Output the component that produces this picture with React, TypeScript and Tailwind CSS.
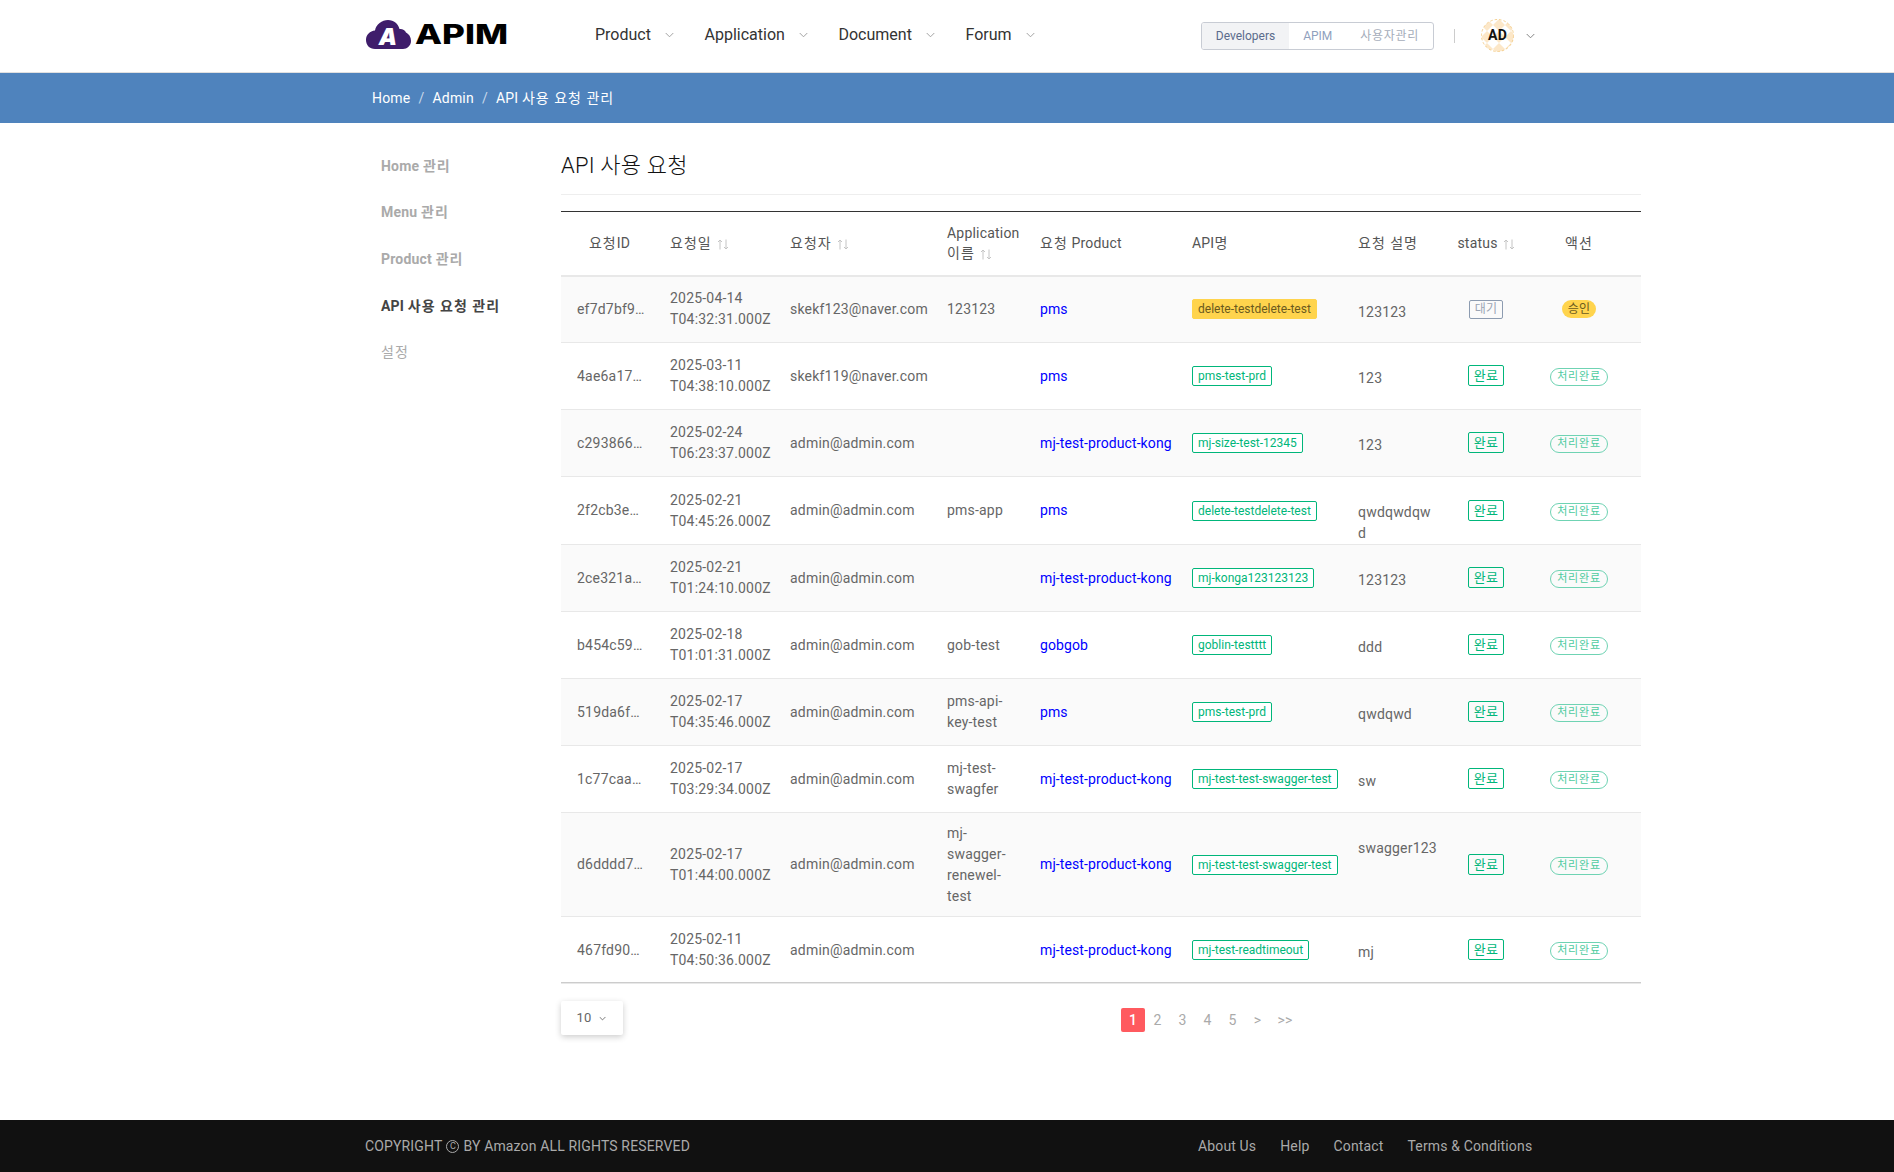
import React from "react";

const font = "font-['Roboto','Noto_Sans_CJK_KR',sans-serif]";

function K({ children }: { children: React.ReactNode }) {
  return <span className="tracking-[1px]">{children}</span>;
}

function Chevron({ className = "" }: { className?: string }) {
  return (
    <svg viewBox="0 0 10 6" className={className} fill="none" stroke="currentColor" strokeWidth="1">
      <path d="M0.8 0.8 L5 5 L9.2 0.8" />
    </svg>
  );
}

function Sort() {
  return (
    <svg viewBox="0 0 12 11" className="inline-block w-[12px] h-[11px] ml-[5px] text-[#c4c4c4]" fill="none" stroke="currentColor" strokeWidth="1">
      <path d="M3 10.5 V1 M1 3 L3 1 L5 3" />
      <path d="M9 0.5 V10 M7 8 L9 10 L11 8" />
    </svg>
  );
}

function Logo() {
  return (
    <div className="flex items-center -mt-[3px]">
      <svg viewBox="0 0 45 29" className="w-[45px] h-[29px] shrink-0 overflow-visible">
        <path d="M9 29 C3.5 29 0 25 0 20 C0 14.5 4 11 9 10.5 C10 4.5 16 0 22 0 C28 0 32 3.5 33.5 9 C36 8.5 39 10 40 12.5 C43 14 45 17 45 21 C45 25.5 41 29 37 29 Z" fill="#3f1d6b" />
        <text x="22" y="25" textAnchor="middle" fill="#ffffff" fontFamily="Inter, sans-serif" fontWeight="900" fontStyle="italic" fontSize="23">A</text>
      </svg>
      <span className="ml-[4px] mt-[1px] text-[27px] leading-[34px] font-extrabold text-black font-['Inter',sans-serif] tracking-[0px] scale-x-[1.3] origin-left">APIM</span>
    </div>
  );
}

function NavItem({ label }: { label: string }) {
  return (
    <div className="flex items-center mr-[30.6px]">
      <span className="text-[16px] tracking-normal text-[#333333]">{label}</span>
      <Chevron className="w-[9px] h-[6px] ml-[14px] text-[#999999]" />
    </div>
  );
}

type Row = {
  id: string;
  d1: string;
  d2: string;
  user: string;
  app: string[];
  product: string;
  api: string;
  desc: string[];
  pending?: boolean;
  tall?: boolean;
};

const rows: Row[] = [
  { id: "ef7d7bf9…", d1: "2025-04-14", d2: "T04:32:31.000Z", user: "skekf123@naver.com", app: ["123123"], product: "pms", api: "delete-testdelete-test", desc: ["123123"], pending: true },
  { id: "4ae6a17…", d1: "2025-03-11", d2: "T04:38:10.000Z", user: "skekf119@naver.com", app: [], product: "pms", api: "pms-test-prd", desc: ["123"] },
  { id: "c293866…", d1: "2025-02-24", d2: "T06:23:37.000Z", user: "admin@admin.com", app: [], product: "mj-test-product-kong", api: "mj-size-test-12345", desc: ["123"] },
  { id: "2f2cb3e…", d1: "2025-02-21", d2: "T04:45:26.000Z", user: "admin@admin.com", app: ["pms-app"], product: "pms", api: "delete-testdelete-test", desc: ["qwdqwdqw", "d"] },
  { id: "2ce321a…", d1: "2025-02-21", d2: "T01:24:10.000Z", user: "admin@admin.com", app: [], product: "mj-test-product-kong", api: "mj-konga123123123", desc: ["123123"] },
  { id: "b454c59…", d1: "2025-02-18", d2: "T01:01:31.000Z", user: "admin@admin.com", app: ["gob-test"], product: "gobgob", api: "goblin-testttt", desc: ["ddd"] },
  { id: "519da6f…", d1: "2025-02-17", d2: "T04:35:46.000Z", user: "admin@admin.com", app: ["pms-api-", "key-test"], product: "pms", api: "pms-test-prd", desc: ["qwdqwd"] },
  { id: "1c77caa…", d1: "2025-02-17", d2: "T03:29:34.000Z", user: "admin@admin.com", app: ["mj-test-", "swagfer"], product: "mj-test-product-kong", api: "mj-test-test-swagger-test", desc: ["sw"] },
  { id: "d6dddd7…", d1: "2025-02-17", d2: "T01:44:00.000Z", user: "admin@admin.com", app: ["mj-", "swagger-", "renewel-", "test"], product: "mj-test-product-kong", api: "mj-test-test-swagger-test", desc: ["swagger123"], tall: true },
  { id: "467fd90…", d1: "2025-02-11", d2: "T04:50:36.000Z", user: "admin@admin.com", app: [], product: "mj-test-product-kong", api: "mj-test-readtimeout", desc: ["mj"] },
];

function Th({ children, className = "" }: { children: React.ReactNode; className?: string }) {
  return <th className={`font-normal text-[14px] leading-[20px] text-[#555555] align-middle pb-[1px] ${className}`}>{children}</th>;
}

function TableRow({ r, i }: { r: Row; i: number }) {
  const bg = i % 2 === 0 ? "bg-[#fafafa]" : "bg-white";
  return (
    <tr className={`${bg} border-b border-[#e8e8e8] ${r.tall ? "h-[104px]" : "h-[67px]"}`}>
      <td className="pl-[16px] text-[14px] leading-[21px] text-[#666666] align-middle">{r.id}</td>
      <td className="pl-[16px] text-[14px] leading-[21px] text-[#666666] align-middle">
        <div>{r.d1}</div>
        <div>{r.d2}</div>
      </td>
      <td className="pl-[16px] text-[14px] leading-[21px] text-[#666666] align-middle">{r.user}</td>
      <td className="pl-[16px] text-[14px] leading-[21px] text-[#666666] align-middle">
        {r.app.map((a) => (
          <div key={a}>{a}</div>
        ))}
      </td>
      <td className="pl-[16px] text-[14px] leading-[21px] tracking-[0.1px] text-[#0000ff] align-middle">{r.product}</td>
      <td className="pl-[16px] pb-[2px] align-middle">
        <span
          className={`inline-block whitespace-nowrap text-[12px] tracking-normal leading-[16px] px-[5px] py-[1px] rounded-[2px] border ${
            r.pending ? "bg-[#ffd44d] border-[#ffd44d] text-[#6b5a1e]" : "bg-white border-[#00b67a] text-[#00b67a]"
          }`}
        >
          {r.api}
        </span>
      </td>
      <td className="pl-[16px] pt-[25px] text-[14px] leading-[21px] text-[#666666] align-top">
        {r.desc.map((d) => (
          <div key={d}>{d}</div>
        ))}
      </td>
      <td className="text-center pb-[2px] align-middle">
        {r.pending ? (
          <span className="inline-block text-[12px] leading-[15px] px-[5px] py-[1px] rounded-[2px] border border-[#8c9bb0] text-[#9aa5b4]">대기</span>
        ) : (
          <span className="inline-block text-[13px] leading-[17px] px-[5px] py-[1px] rounded-[2px] border border-[#00b67a] text-[#00b67a]">완료</span>
        )}
      </td>
      <td className="text-center pb-[2px] align-middle">
        {r.pending ? (
          <span className="inline-block text-[12px] leading-[16px] px-[6px] py-[1px] rounded-full bg-[#ffd44d] text-[#6b5a1e]">승인</span>
        ) : (
          <span className="inline-block text-[11px] leading-[14px] tracking-[0.8px] px-[6px] py-[1px] rounded-full border border-[#6fd3b3] text-[#4ecb9f]">처리완료</span>
        )}
      </td>
    </tr>
  );
}

export default function App() {
  return (
    <div className={`${font} tracking-[0.2px] w-[1894px] h-[1172px] bg-white flex flex-col overflow-hidden`}>
      <header className="h-[73px] shrink-0 border-b border-[#e0e0e0] bg-white flex items-center pl-[366px]">
        <div className="w-[229px] shrink-0">
          <Logo />
        </div>
        <nav className="flex items-center -mt-[2px]">
          <NavItem label="Product" />
          <NavItem label="Application" />
          <NavItem label="Document" />
          <NavItem label="Forum" />
        </nav>
        <div className="ml-[135.6px] flex items-center h-[28px] border border-[#c8ccd4] rounded-[3px] text-[12px] tracking-normal overflow-hidden">
          <div className="h-full flex items-center px-[14px] bg-[#f2f3f5] text-[#5a6b8c]">Developers</div>
          <div className="h-full flex items-center pl-[14px] pr-[14px] text-[#8fa0bd]">APIM</div>
          <div className="h-full flex items-center pl-[14px] pr-[14px] tracking-[0.7px] text-[#a5adba]">사용자관리</div>
        </div>
        <div className="ml-[20px] w-px h-[14px] bg-[#cccccc]" />
        <div className="relative ml-[26px] -mt-[2px] w-[33px] h-[33px] flex items-center justify-center text-[14px] font-bold text-[#111111]">
          <svg viewBox="0 0 33 33" className="absolute inset-0 w-[33px] h-[33px]">
            <defs>
              <pattern id="avatarDiamonds" width="12" height="12" patternUnits="userSpaceOnUse">
                <path d="M6 0 L12 6 L6 12 L0 6 Z" fill="#fce7c8" />
              </pattern>
            </defs>
            <circle cx="16.5" cy="16.5" r="16" fill="#ffffff" />
            <circle cx="16.5" cy="16.5" r="16" fill="url(#avatarDiamonds)" stroke="#f5cf8e" strokeWidth="1" strokeDasharray="2.5 2" />
          </svg>
          <span className="relative">AD</span>
        </div>
        <Chevron className="ml-[12px] w-[9px] h-[6px] text-[#777777]" />
      </header>

      <div className="h-[50px] shrink-0 bg-[#4f83bd] flex items-center pl-[372px] text-[14px] text-white">
        <span>Home</span>
        <span className="mx-[8px] text-[#c8d8ea]">/</span>
        <span>Admin</span>
        <span className="mx-[8px] text-[#c8d8ea]">/</span>
        <span>API <K>사용 요청 관리</K></span>
      </div>

      <div className="flex-1 flex pl-[381px]">
        <aside className="w-[180px] shrink-0 pt-[33px] text-[14px] font-bold leading-[21px] text-[#aaaaaa]">
          <div className="h-[46px]">Home <K>관리</K></div>
          <div className="h-[47px]">Menu <K>관리</K></div>
          <div className="h-[47px]">Product <K>관리</K></div>
          <div className="h-[46px] text-[#444444]">API <K>사용 요청 관리</K></div>
          <div className="font-normal"><K>설정</K></div>
        </aside>
        <main className="w-[1080px] shrink-0">
          <h1 className="mt-[28px] text-[22px] leading-[30px] font-light tracking-[0.2px] text-[#111111]">API 사용 요청</h1>
          <div className="mt-[13px] border-b border-[#eeeeee]" />
          <table className="mt-[16px] w-[1080px] table-fixed border-collapse border-t border-t-[#333333]">
            <colgroup>
              <col className="w-[93px]" />
              <col className="w-[120px]" />
              <col className="w-[157px]" />
              <col className="w-[93px]" />
              <col className="w-[152px]" />
              <col className="w-[166px]" />
              <col className="w-[113px]" />
              <col className="w-[62px]" />
              <col className="w-[124px]" />
            </colgroup>
            <thead>
              <tr className="h-[64px] border-b-[2px] border-b-[#e8e8e8]">
                <Th className="text-center pl-[4px]"><K>요청</K>ID</Th>
                <Th className="pl-[16px] text-left"><K>요청일</K><Sort /></Th>
                <Th className="pl-[16px] text-left"><K>요청자</K><Sort /></Th>
                <Th className="pl-[16px] text-left">Application<br /><K>이름</K><Sort /></Th>
                <Th className="pl-[16px] text-left"><K>요청</K> Product</Th>
                <Th className="pl-[16px] text-left">API<K>명</K></Th>
                <Th className="pl-[16px] text-left"><K>요청 설명</K></Th>
                <Th className="text-center whitespace-nowrap">status<Sort /></Th>
                <Th className="text-center"><K>액션</K></Th>
              </tr>
            </thead>
            <tbody>
              {rows.map((r, i) => (
                <TableRow key={r.id} r={r} i={i} />
              ))}
            </tbody>
          </table>
          <div className="border-t border-[#cccccc] -mt-[2px] flex items-start justify-between">
            <div className="mt-[18px] w-[62px] h-[34px] bg-white rounded-[2px] shadow-[0_2px_6px_rgba(0,0,0,0.2)] flex items-center justify-center text-[13px] text-[#666666] pr-[2px]">
              10
              <Chevron className="ml-[7px] w-[7px] h-[5px] text-[#444444]" />
            </div>
            <div className="mt-[25px] mr-[341px] flex items-center text-[14px] text-[#aaaaaa]">
              <span className="w-[24px] h-[24px] bg-[#ff5a5f] rounded-[2px] text-white font-medium flex items-center justify-center">1</span>
              <span className="w-[25px] text-center">2</span>
              <span className="w-[25px] text-center">3</span>
              <span className="w-[25px] text-center">4</span>
              <span className="w-[25px] text-center">5</span>
              <span className="w-[25px] text-center">&gt;</span>
              <span className="w-[30px] text-center">&gt;&gt;</span>
            </div>
          </div>
        </main>
      </div>

      <footer className="h-[52px] shrink-0 bg-[#111111] flex items-center pl-[365px] text-[14px] tracking-[0.15px] text-[#aaaaaa]">
        <span className="flex items-center">
          COPYRIGHT
          <span className="mx-[4px] w-[13px] h-[13px] rounded-full border border-[#aaaaaa] text-[9px] leading-[11px] text-center">C</span>
          BY Amazon ALL RIGHTS RESERVED
        </span>
        <div className="ml-[508px] flex items-center gap-[24px]">
          <span>About Us</span>
          <span>Help</span>
          <span>Contact</span>
          <span>Terms &amp; Conditions</span>
        </div>
      </footer>
    </div>
  );
}
